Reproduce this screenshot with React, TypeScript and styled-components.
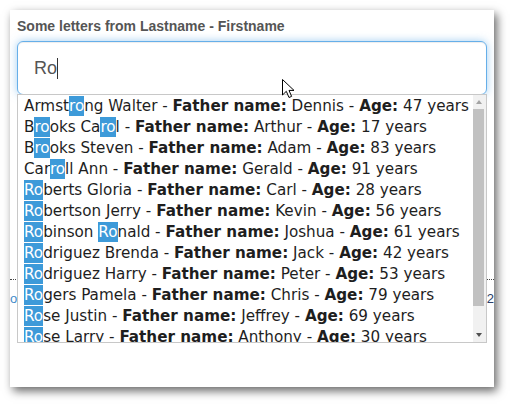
import React from "react";
import styled, { createGlobalStyle } from "styled-components";

const GlobalStyle = createGlobalStyle`
  html, body { margin: 0; padding: 0; background: #fff; }
  * { box-sizing: border-box; }
`;

const Page = styled.div`
  position: relative;
  padding: 10px;
  width: 510px;
  height: 404px;
`;

const Card = styled.div`
  width: 484px;
  height: 377px;
  padding: 8px 7px 0;
  background: #fff;
  box-shadow: 3px 4px 9px rgba(0, 0, 0, 0.6);
  overflow: hidden;
`;

const Label = styled.div`
  font: 700 14px/16px "Liberation Sans", Arial, sans-serif;
  color: #555;
  margin-bottom: 7px;
`;

const Field = styled.div`
  position: relative;
`;

const InputBox = styled.div`
  height: 54px;
  border: 1px solid #66afe9;
  border-radius: 6px;
  box-shadow: inset 0 1px 1px rgba(0, 0, 0, 0.075), 0 0 8px rgba(102, 175, 233, 0.6);
  padding: 0 16px;
  display: flex;
  align-items: center;
  font: 18px "Liberation Sans", Arial, sans-serif;
  color: #555;
`;

const Caret = styled.span`
  display: inline-block;
  width: 1px;
  height: 21px;
  background: #333;
`;

const Dropdown = styled.div`
  position: absolute;
  top: 53px;
  left: 0;
  right: 0;
  height: 249px;
  border: 1px solid #c8c8c8;
  background: #fff;
  display: flex;
  z-index: 2;
`;

const Items = styled.div`
  flex: 1;
  overflow: hidden;
  padding: 1px 0 0 6px;
`;

const Item = styled.div`
  font: 15.2px/21px "DejaVu Sans", Verdana, sans-serif;
  color: #1e1e1e;
  white-space: nowrap;
`;

const Mark = styled.span`
  background: #3d9ad9;
  color: #fff;
  padding: 1px 0;
`;

const Scrollbar = styled.div`
  width: 13px;
  background: #f1f1f1;
  display: flex;
  flex-direction: column;
`;

const ArrowButton = styled.div<{ $dir: "up" | "down" }>`
  height: 14px;
  display: flex;
  align-items: center;
  justify-content: center;
  padding-right: 1px;
  &::after {
    content: "";
    width: 0;
    height: 0;
    border-left: 3.5px solid transparent;
    border-right: 3.5px solid transparent;
    ${(p) =>
      p.$dir === "up"
        ? "border-bottom: 4px solid #a3a3a3;"
        : "border-top: 4px solid #505050;"}
  }
`;

const Thumb = styled.div`
  height: 197px;
  margin-right: 2px;
  background: #c1c1c1;
`;

const Spacer = styled.div`
  flex: 1;
`;

const Behind = styled.div`
  margin: 0 -7px;
`;

const BehindBlock = styled.div`
  height: 185px;
  border-bottom: 1px dotted #444;
`;

const BehindLine = styled.div`
  display: flex;
  justify-content: space-between;
  margin-top: 11px;
  font: 13px/15px "Liberation Sans", Arial, sans-serif;
`;

const LinkText = styled.span`
  color: #428bca;
`;

const DarkText = styled.span`
  color: #2a3f6a;
`;

const Cursor = styled.svg`
  position: absolute;
  left: 281px;
  top: 78px;
  z-index: 5;
`;

type Person = { name: string; father: string; age: number };

const people: Person[] = [
  { name: "Armstrong Walter", father: "Dennis", age: 47 },
  { name: "Brooks Carol", father: "Arthur", age: 17 },
  { name: "Brooks Steven", father: "Adam", age: 83 },
  { name: "Carroll Ann", father: "Gerald", age: 91 },
  { name: "Roberts Gloria", father: "Carl", age: 28 },
  { name: "Robertson Jerry", father: "Kevin", age: 56 },
  { name: "Robinson Ronald", father: "Joshua", age: 61 },
  { name: "Rodriguez Brenda", father: "Jack", age: 42 },
  { name: "Rodriguez Harry", father: "Peter", age: 53 },
  { name: "Rogers Pamela", father: "Chris", age: 79 },
  { name: "Rose Justin", father: "Jeffrey", age: 69 },
  { name: "Rose Larry", father: "Anthony", age: 30 },
  { name: "Ross Diane", father: "Walter", age: 45 },
  { name: "Strong Megan", father: "Paul", age: 36 },
];

function highlight(text: string, q: string) {
  const parts = text.split(new RegExp(`(${q})`, "i"));
  return parts.map((p, i) =>
    p.toLowerCase() === q.toLowerCase() ? <Mark key={i}>{p}</Mark> : <React.Fragment key={i}>{p}</React.Fragment>
  );
}

export default function App() {
  const query = "Ro";
  return (
    <>
      <GlobalStyle />
      <Page>
        <Card>
          <Label>Some letters from Lastname - Firstname</Label>
          <Field>
            <InputBox>
              {query}
              <Caret />
            </InputBox>
            <Dropdown>
              <Items>
                {people.map((p) => (
                  <Item key={p.name}>
                    {highlight(p.name, "ro")} - <b>Father name:</b> {p.father} - <b>Age:</b> {p.age} years
                  </Item>
                ))}
              </Items>
              <Scrollbar>
                <ArrowButton $dir="up" />
                <Thumb />
                <Spacer />
                <ArrowButton $dir="down" />
              </Scrollbar>
            </Dropdown>
          </Field>
          <Behind>
            <BehindBlock />
            <BehindLine>
              <LinkText>or</LinkText>
              <DarkText>-2</DarkText>
            </BehindLine>
          </Behind>
        </Card>
        <Cursor width="14" height="21" viewBox="0 0 14 21">
          <path
            d="M1.5 1.5 L1.5 17 L5.3 13.3 L8 19.5 L10.6 18.4 L8 12.4 L13 12.4 Z"
            fill="#fff"
            stroke="#000"
            strokeWidth="1"
            strokeLinejoin="miter"
          />
        </Cursor>
      </Page>
    </>
  );
}
